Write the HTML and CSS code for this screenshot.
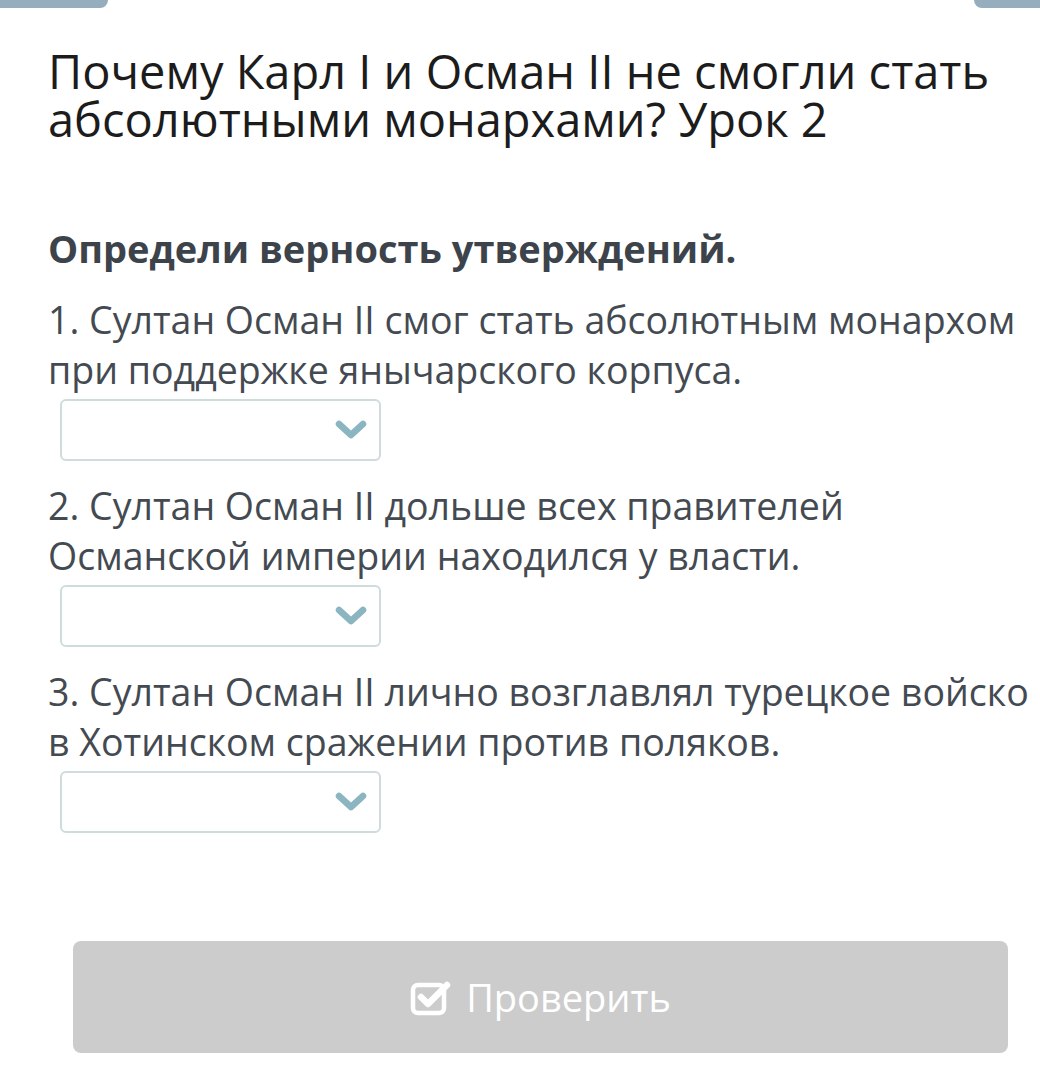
FILE: index.html
```html
<!DOCTYPE html>
<html lang="ru">
<head>
<meta charset="utf-8">
<title>Урок 2</title>
<link rel="stylesheet" href="styles.css">
</head>
<body>
<div class="tabs">
  <div class="tab tab-left"></div>
  <div class="tab tab-right"></div>
</div>
<main class="page">
  <h1 class="title">Почему Карл I и Осман II не смогли стать абсолютными монархами? Урок 2</h1>
  <h2 class="task">Определи верность утверждений.</h2>
  <div class="item">
    <p class="statement">1. Султан Осман II смог стать абсолютным монархом при поддержке янычарского корпуса.</p>
    <div class="select"><svg class="chev" viewBox="0 0 32 22" width="32" height="22"><path d="M4 5 L16 16 L28 5" fill="none" stroke="#8ab5c1" stroke-width="6.5" stroke-linecap="round" stroke-linejoin="round"/></svg></div>
  </div>
  <div class="item">
    <p class="statement">2. Султан Осман II дольше всех правителей Османской империи находился у власти.</p>
    <div class="select"><svg class="chev" viewBox="0 0 32 22" width="32" height="22"><path d="M4 5 L16 16 L28 5" fill="none" stroke="#8ab5c1" stroke-width="6.5" stroke-linecap="round" stroke-linejoin="round"/></svg></div>
  </div>
  <div class="item">
    <p class="statement">3. Султан Осман II лично возглавлял турецкое войско в Хотинском сражении против поляков.</p>
    <div class="select"><svg class="chev" viewBox="0 0 32 22" width="32" height="22"><path d="M4 5 L16 16 L28 5" fill="none" stroke="#8ab5c1" stroke-width="6.5" stroke-linecap="round" stroke-linejoin="round"/></svg></div>
  </div>
</main>
<div class="actions">
  <button class="check" type="button">
    <svg class="check-icon" viewBox="0 0 42 38" width="42" height="38"><rect x="3" y="7" width="31" height="28" rx="5" fill="none" stroke="#fff" stroke-width="4.5"/><path d="M11 19 L18 26 L37 7" fill="none" stroke="#fff" stroke-width="6.5" stroke-linecap="round" stroke-linejoin="round"/></svg>
    <span>Проверить</span>
  </button>
</div>
</body>
</html>
```
FILE: styles.css
```css
html, body {
  margin: 0;
  padding: 0;
  background: #fff;
}
body {
  font-family: "Open Sans", "Noto Sans", sans-serif;
  width: 1040px;
  height: 1082px;
  overflow: hidden;
}
.tabs {
  display: flex;
  justify-content: space-between;
  height: 8px;
}
.tab {
  height: 8px;
  background: #95adbd;
}
.tab-left {
  width: 108px;
  border-bottom-right-radius: 10px;
}
.tab-right {
  width: 66px;
  border-bottom-left-radius: 10px;
}
.page {
  padding: 0 0 0 48px;
}
.title {
  margin: 39px 0 0;
  font-size: 47px;
  line-height: 48px;
  font-weight: 400;
  color: #1c1c1c;
}
.task {
  margin: 82px 0 0;
  font-size: 38px;
  line-height: 46px;
  font-weight: 700;
  color: #3d434b;
}
.item {
  margin-top: 24px;
}
.item + .item {
  margin-top: 20px;
}
.statement {
  margin: 0;
  font-size: 37.5px;
  line-height: 50px;
  color: #444a51;
}
.select {
  margin: 4px 0 0 12px;
  width: 321px;
  height: 62px;
  box-sizing: border-box;
  border: 2px solid #cfdcdc;
  border-radius: 6px;
  display: flex;
  align-items: center;
  justify-content: flex-end;
  padding-right: 12px;
}
.chev {
  display: block;
}
.actions {
  padding: 0 32px 0 73px;
  margin-top: 108px;
}
.check {
  width: 100%;
  height: 112px;
  border: 0;
  border-radius: 8px;
  background: #cccccc;
  color: #fff;
  font-family: "Open Sans", "Noto Sans", sans-serif;
  font-size: 38px;
  display: flex;
  align-items: center;
  justify-content: center;
  gap: 14px;
  padding: 0;
}
.check-icon {
  display: block;
}
```
